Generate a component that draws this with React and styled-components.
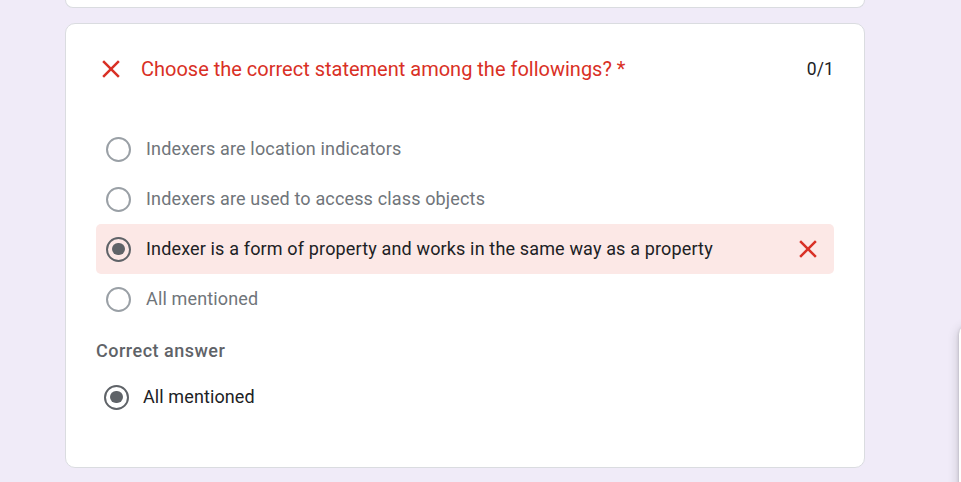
import React from 'react'
import styled, { createGlobalStyle } from 'styled-components'

const GlobalStyle = createGlobalStyle`
  html, body {
    margin: 0;
    padding: 0;
    background: #f0ebf8;
    font-family: Roboto, "Liberation Sans", Arial, sans-serif;
  }
`

const options = [
  { label: 'Indexers are location indicators' },
  { label: 'Indexers are used to access class objects' },
  { label: 'Indexer is a form of property and works in the same way as a property', chosen: true, wrong: true },
  { label: 'All mentioned' },
]

const CloseIcon = ({ size = 30 }) => (
  <svg width={size} height={size} viewBox="0 0 24 24">
    <path
      fill="#d93025"
      d="M19 6.41 17.59 5 12 10.59 6.41 5 5 6.41 10.59 12 5 17.59 6.41 19 12 13.41 17.59 19 19 17.59 13.41 12z"
    />
  </svg>
)

const App = () => {
  return (
    <>
      <GlobalStyle />
      <Page>
        <StubCard />
        <Card>
          <TitleRow>
            <CloseIcon />
            <Title>Choose the correct statement among the followings? *</Title>
            <Score>0/1</Score>
          </TitleRow>

          <OptionList>
            {options.map((o) => (
              <Option key={o.label} $wrong={o.wrong}>
                <Radio $checked={o.chosen} />
                <OptionText $checked={o.chosen}>{o.label}</OptionText>
                {o.wrong && (
                  <MarkIcon>
                    <CloseIcon />
                  </MarkIcon>
                )}
              </Option>
            ))}
          </OptionList>

          <AnswerLabel>Correct answer</AnswerLabel>
          <AnswerRow>
            <Radio $checked />
            <AnswerText>All mentioned</AnswerText>
          </AnswerRow>
        </Card>
      </Page>
      <SideToolbar />
    </>
  )
}

const Page = styled.div`
  width: 800px;
  margin-left: 65px;
  display: flex;
  flex-direction: column;
  gap: 15px;
`

const StubCard = styled.div`
  height: 7px;
  background: #fff;
  border: 1px solid #dadce0;
  border-top: none;
  border-radius: 0 0 10px 10px;
`

const Card = styled.div`
  background: #fff;
  border: 1px solid #dadce0;
  border-radius: 10px;
  padding: 30px 30px 44px;
  height: 445px;
  box-sizing: border-box;
`

const TitleRow = styled.div`
  display: flex;
  align-items: center;
  height: 30px;
  gap: 15px;
`

const Title = styled.div`
  flex: 1;
  color: #d93025;
  font-size: 20px;
  letter-spacing: 0;
`

const Score = styled.div`
  color: #202124;
  font-size: 17.5px;
  letter-spacing: 0.1px;
`

const OptionList = styled.div`
  margin-top: 40px;
  display: flex;
  flex-direction: column;
`

const Option = styled.div`
  display: flex;
  align-items: center;
  height: 50px;
  padding: 0 0 0 10px;
  gap: 15px;
  border-radius: 5px;
  background: ${(p) => (p.$wrong ? '#fce8e6' : 'transparent')};
`

const Radio = styled.span`
  flex: none;
  width: 25px;
  height: 25px;
  box-sizing: border-box;
  border-radius: 50%;
  border: 2.5px solid ${(p) => (p.$checked ? '#5f6368' : '#9aa0a6')};
  display: flex;
  align-items: center;
  justify-content: center;

  &::after {
    content: '';
    width: 12.5px;
    height: 12.5px;
    border-radius: 50%;
    background: #5f6368;
    display: ${(p) => (p.$checked ? 'block' : 'none')};
  }
`

const OptionText = styled.span`
  flex: 1;
  font-size: 18px;
  line-height: 24px;
  letter-spacing: 0.15px;
  color: ${(p) => (p.$checked ? '#202124' : '#70757a')};
`

const MarkIcon = styled.span`
  display: flex;
  margin-right: 11px;
`

const AnswerLabel = styled.div`
  margin-top: 14px;
  font-size: 18px;
  font-weight: 500;
  color: #5f6368;
  line-height: 25px;
  letter-spacing: 0.5px;
`

const AnswerRow = styled.div`
  display: flex;
  align-items: center;
  height: 50px;
  margin-top: 9px;
  padding-left: 8px;
  gap: 14px;
`

const AnswerText = styled.span`
  font-size: 18px;
  line-height: 24px;
  letter-spacing: 0.1px;
  color: #202124;
`

const SideToolbar = styled.div`
  position: fixed;
  left: 959px;
  top: 324px;
  width: 60px;
  height: 220px;
  background: #fff;
  border-radius: 10px 0 0 10px;
  box-shadow: 0 1px 3px rgba(60, 64, 67, 0.3), 0 4px 8px 3px rgba(60, 64, 67, 0.15);
`

export default App
